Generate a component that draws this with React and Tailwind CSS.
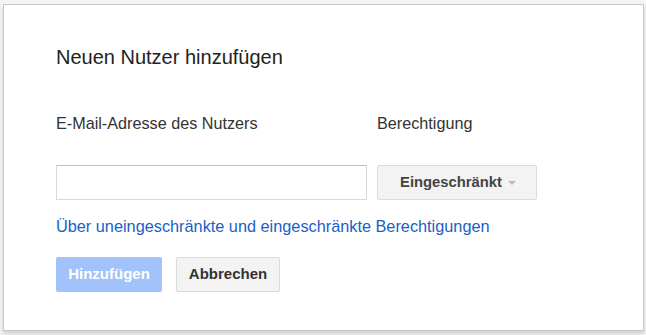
export default function App() {
  return (
    <div className="w-[646px] h-[335px] bg-[#f4f4f4] pl-[3px] pt-[4px] overflow-hidden" style={{ fontFamily: '"Liberation Sans", Arial, sans-serif' }}>
      <div className="w-[641px] h-[327px] bg-white border border-[#c8c8c8] shadow-[0_3px_4px_rgba(0,0,0,0.14)] pl-[52px] pt-[40px]">
        <div className="text-[20px] text-[#222] leading-[24px]">Neuen Nutzer hinzufügen</div>
        <div className="flex mt-[45px] text-[16.2px] text-[#333] leading-[19px]">
          <div className="w-[321px]">E-Mail-Adresse des Nutzers</div>
          <div>Berechtigung</div>
        </div>
        <div className="flex mt-[32px] items-center">
          <input className="w-[311px] h-[35px] border border-[#d9d9d9] border-t-[#c0c0c0] outline-none px-2 text-[15px]" />
          <button className="ml-[10px] w-[160px] h-[35px] rounded-[2px] border border-[#dcdcdc] bg-[#f3f3f3] text-[14.8px] font-bold text-[#444] flex items-center justify-center pl-[2px]">
            Eingeschränkt
            <span className="ml-[6px] w-0 h-0 border-l-[4px] border-r-[4px] border-t-[4px] border-l-transparent border-r-transparent border-t-[#bbb]" />
          </button>
        </div>
        <div className="mt-[17px] text-[16.3px] text-[#1a5fc4] leading-[19px]">Über uneingeschränkte und eingeschränkte Berechtigungen</div>
        <div className="flex mt-[21px] gap-[14px]">
          <button className="w-[106px] h-[35px] rounded-[2px] bg-[#a1c2fa] text-white text-[15px] font-bold">Hinzufügen</button>
          <button className="w-[104px] h-[35px] rounded-[2px] border border-[#dcdcdc] bg-[#f3f3f3] text-[#333] text-[15px] font-bold">Abbrechen</button>
        </div>
      </div>
    </div>
  );
}
